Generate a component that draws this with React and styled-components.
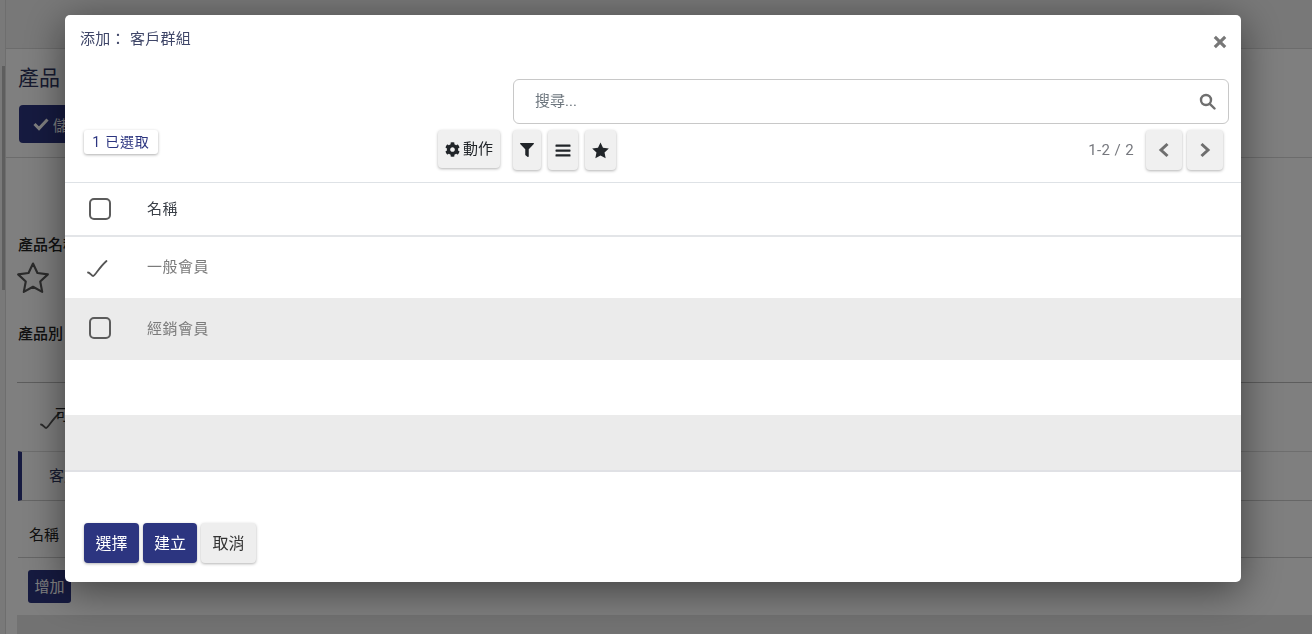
import React from 'react';
import styled, { createGlobalStyle } from 'styled-components';

const Global = createGlobalStyle`
  html, body { margin: 0; height: 100%; overflow: hidden; background: #fff; }
  body { font-family: Roboto, "Noto Sans CJK TC", sans-serif; font-size: 15px; color: #212529; }
  * { box-sizing: border-box; }
`;

const Page = styled.div`
  height: 634px; overflow: hidden; display: flex;
`;
const SideRail = styled.div`
  width: 6px; flex: none; background: #f2f2f2; border-right: 1px solid #dcdcdc; padding: 66px 0 0 2px;
`;
const RailThumb = styled.div`
  width: 3px; height: 224px; background: #bdbdbd;
`;
const PageBody = styled.div`
  flex: 1; min-width: 0; display: flex; flex-direction: column;
`;
const TopBar = styled.div`
  height: 49px; flex: none; background: #f0f0f0; border-bottom: 1px solid #d8d8d8;
`;
const PageHead = styled.div`
  height: 109px; flex: none; padding: 15px 0 0 12px; border-bottom: 1px solid #d8d8d8;
`;
const PageTitle = styled.div`
  font-size: 21px; line-height: 28px; color: #2e3560; height: 41px;
`;
const SaveBtn = styled.div`
  width: 70px; height: 38px; background: #2c3580; border-radius: 4px; color: #fff; display: flex;
  align-items: center; gap: 4px; padding-left: 14px; margin-left: 1px;
`;
const Form = styled.div`
  padding: 77px 0 0 12px; flex: none; height: 293px; display: flex; flex-direction: column;
`;
const FieldLabel = styled.div`
  font-size: 15px; font-weight: 500; line-height: 20px; color: #222;
`;
const StarWrap = styled.div`
  height: 69px; padding-top: 6px; margin-left: -2px; color: #555;
`;
const Rule = styled.div`
  border-top: 1px solid #bbb; margin-top: 38px; height: 0; margin-left: -1px;
`;
const CheckRow = styled.div`
  display: flex; align-items: flex-start; padding: 23px 0 0 20px; font-size: 15px; line-height: 18px;
`;
const Tabs = styled.div`
  height: 50px; flex: none; margin-left: 12px; border-left: 4px solid #2c3580; border-top: 1px solid #ddd;
  border-bottom: 1px solid #ccc; padding: 12px 0 0 27px; color: #2e3560; font-size: 15px;
`;
const TableHead = styled.div`
  height: 57px; flex: none; margin-left: 12px; padding: 22px 0 0 11px; border-bottom: 1px solid #ccc; color: #222;
  font-size: 15px;
`;
const AddBtn = styled.div`
  width: 43px; height: 33px; margin: 12px 0 0 22px; flex: none; background: #2c3580; border-radius: 3px;
  color: #fff; display: flex; align-items: center; justify-content: center; font-size: 15px; padding-bottom: 2px;
`;
const BottomBand = styled.div`
  height: 20px; flex: none; margin: 12px 0 0 11px; background: #e4e4e4;
`;

const Backdrop = styled.div`
  position: fixed; inset: 0; background: rgba(0, 0, 0, .5); padding: 15px 71px 0 65px;
`;
const Modal = styled.div`
  width: 1176px; height: 567px; background: #fff; border-radius: 5px; display: flex; flex-direction: column;
  box-shadow: 0 8px 40px rgba(0, 0, 0, .5);
`;
const ModalHeader = styled.div`
  height: 64px; flex: none; display: flex; justify-content: space-between; padding: 13px 14px 0 15px;
`;
const ModalTitle = styled.div`
  font-size: 15px; line-height: 22px; color: #3f4668; letter-spacing: .3px;
`;
const CloseIcon = styled.svg`
  width: 14px; height: 14px; margin-top: 7px; fill: #777;
`;
const Controls = styled.div`
  height: 104px; flex: none; display: grid; grid-template-columns: 448px 1fr; border-bottom: 1px solid #dee2e6;
`;
const LeftControls = styled.div`
  display: flex; justify-content: space-between; align-items: flex-start; padding: 51px 0 0 19px;
`;
const Badge = styled.div`
  height: 24px; width: 74px; border-radius: 3px; background: #fff; color: #2c3580; font-size: 14px; letter-spacing: .8px;
  display: flex; align-items: center; justify-content: center; white-space: nowrap; padding-bottom: 2px;
  box-shadow: 0 1px 3px rgba(0, 0, 0, .32);
`;
const RightControls = styled.div`
  display: flex; flex-direction: column; padding-right: 12px;
`;
const SearchBox = styled.div`
  height: 45px; border: 1px solid #c8c8c8; border-radius: 6px; display: flex; align-items: center;
  justify-content: space-between; padding: 0 12px 0 21px; color: #6c757d; font-size: 15px;
`;
const SearchText = styled.span`
  padding-bottom: 4px;
`;
const ToolRow = styled.div`
  display: flex; align-items: center; margin-top: 6px; height: 40px;
`;
const ToolBtn = styled.div`
  height: ${p => p.$h || 38}px; width: ${p => p.$w}px; margin-right: ${p => p.$mr || 0}px; flex: none; background: #f0f0f0; border-radius: 4px;
  color: #212529; display: flex; align-items: center; justify-content: center; gap: 3px; font-size: 15px;
  box-shadow: 0 1px 3px rgba(0, 0, 0, .3); white-space: nowrap;
`;
const ActionLabel = styled.span`
  padding-bottom: 3px;
`;
const ActionCol = styled.div`
  margin-right: 13px;
`;
const Pager = styled.div`
  margin-left: auto; display: flex; align-items: center; color: #76787e; font-size: 15px; margin-right: 6px;
`;
const PagerText = styled.div`
  margin: 0 12px 0 0; letter-spacing: .4px;
`;
const HeadRow = styled.div`
  height: 54px; flex: none; display: flex; align-items: center; border-bottom: 2px solid #e3e5e8; color: #3a3f47; padding-bottom: 1px;
`;
const Row = styled.div`
  height: ${p => p.$h}px; flex: none; display: flex; align-items: center; background: ${p => (p.$alt ? '#ebebeb' : '#fff')};
  border-bottom: ${p => (p.$end ? '2px solid #e0e1e5' : '0')}; color: #7b7b7b; padding-bottom: 2px;
`;
const CheckCell = styled.div`
  width: 82px; flex: none; padding-left: ${p => p.$pl || 24}px; display: flex;
`;
const Box = styled.div`
  width: 22px; height: 22px; border: 2px solid #5c5c5c; border-radius: 5px; background: transparent;
`;
const NameCell = styled.div`
  font-size: 15px; letter-spacing: .5px; padding-bottom: 2px;
`;
const Footer = styled.div`
  padding: 51px 0 0 19px; display: flex; gap: 4px;
`;
const FootBtn = styled.div`
  height: 40px; width: ${p => p.$w}px; border-radius: 4px; display: flex; align-items: center; justify-content: center;
  font-size: 16px; background: ${p => (p.$primary ? '#2c3580' : '#eeeeee')}; color: ${p => (p.$primary ? '#fff' : '#333')};
  box-shadow: 0 1px 3px rgba(0, 0, 0, .3); padding-bottom: 3px;
`;
const CheckGap = styled.span`
  display: flex; margin-right: -9px;
`;

const Check = ({ size = 26 }) => (
  <svg width={size} height={size} viewBox="0 0 26 26" fill="none" stroke="#555" strokeWidth="1.8" strokeLinecap="round" strokeLinejoin="round">
    <path d="M3 18.500c2 0 3.600 3.500 5.200 3.500C10 22 14 13.500 21.500 7" />
  </svg>
);
const Gear = () => (
  <svg width="15" height="15" viewBox="0 0 512 512" fill="#212529"><path d="M487.400 315.700l-42.600-24.600c4.300-23.200 4.300-47 0-70.200l42.600-24.600c4.900-2.800 7.100-8.600 5.500-14-11.100-35.600-30-67.800-54.700-94.600-3.800-4.100-10-5.100-14.800-2.300L380.800 110c-17.900-15.400-38.500-27.300-60.800-35.100V25.800c0-5.600-3.900-10.500-9.400-11.700-36.700-8.200-74.300-7.800-109.200 0-5.500 1.200-9.400 6.100-9.400 11.700V75c-22.200 7.900-42.800 19.800-60.800 35.100L88.700 85.500c-4.900-2.800-11-1.900-14.800 2.300-24.700 26.700-43.600 58.900-54.700 94.600-1.700 5.400.6 11.200 5.500 14L67.300 221c-4.300 23.200-4.300 47 0 70.200l-42.600 24.600c-4.900 2.800-7.100 8.600-5.500 14 11.100 35.600 30 67.800 54.700 94.600 3.800 4.100 10 5.100 14.800 2.300l42.600-24.600c17.900 15.400 38.500 27.300 60.800 35.100v49.200c0 5.600 3.900 10.500 9.400 11.700 36.700 8.200 74.300 7.800 109.200 0 5.500-1.200 9.400-6.100 9.400-11.700v-49.200c22.200-7.900 42.800-19.800 60.800-35.100l42.600 24.600c4.900 2.800 11 1.900 14.800-2.300 24.700-26.700 43.600-58.900 54.700-94.600 1.500-5.500-.7-11.300-5.600-14.100zM256 336c-44.100 0-80-35.900-80-80s35.900-80 80-80 80 35.900 80 80-35.900 80-80 80z" /></svg>
);
const Filter = () => (
  <svg width="14" height="14" viewBox="0 0 512 512" fill="#212529"><path d="M487.976 0H24.028C2.710 0-8.047 25.866 7.058 40.971L192 225.941V432c0 7.831 3.821 15.170 10.237 19.662l80 55.980C298.020 518.690 320 507.493 320 487.980V225.941l184.947-184.970C520.021 25.896 509.338 0 487.976 0z" /></svg>
);
const Bars = () => (
  <svg width="16" height="15" viewBox="0 0 16 15" fill="#212529"><rect x="0.500" y="1.500" width="15" height="2.300" rx=".6" /><rect x="0.500" y="6.400" width="15" height="2.300" rx=".6" /><rect x="0.500" y="11.300" width="15" height="2.300" rx=".6" /></svg>
);
const Star = ({ size = 19, fill = '#212529', stroke = 'none', sw = 0 }) => (
  <svg width={size} height={size} viewBox="0 0 24 24" fill={fill} stroke={stroke} strokeWidth={sw} strokeLinejoin="round"><path d="M12 1.800l3.150 6.700 7.350.95-5.400 5.050 1.400 7.300L12 18.200l-6.500 3.600 1.400-7.300-5.400-5.050 7.350-.95z" /></svg>
);
const Search = () => (
  <svg width="17" height="17" viewBox="0 0 17 17" fill="none" stroke="#6f6f6f" strokeWidth="2.400" strokeLinecap="round"><circle cx="7" cy="7" r="5" /><path d="M10.800 10.800l4.700 4.700" /></svg>
);
const Chevron = ({ dir }) => (
  <svg width="12" height="16" viewBox="0 0 12 16" fill="none" stroke="#6e6e6e" strokeWidth="3" strokeLinejoin="miter"><path d={dir === 'l' ? 'M9.500 2L3 8l6.500 6' : 'M2.500 2L9 8l-6.500 6'} /></svg>
);

export default function App() {
  return (
    <Page>
      <Global />
      <SideRail><RailThumb /></SideRail>
      <PageBody>
        <TopBar />
        <PageHead>
          <PageTitle>產品</PageTitle>
          <SaveBtn>
            <svg width="16" height="14" viewBox="0 0 16 14" fill="none" stroke="#fff" strokeWidth="3"><path d="M1.500 7l4.500 4.500 8.500-9" /></svg>
            儲存
          </SaveBtn>
        </PageHead>
        <Form>
          <FieldLabel>產品名稱</FieldLabel>
          <StarWrap><Star size={34} fill="none" stroke="#555" sw={1.500} /></StarWrap>
          <FieldLabel>產品別</FieldLabel>
          <Rule />
          <CheckRow><CheckGap><Check /></CheckGap>可銷售</CheckRow>
        </Form>
        <Tabs>客戶群組</Tabs>
        <TableHead>名稱</TableHead>
        <AddBtn>增加</AddBtn>
        <BottomBand />
      </PageBody>
      <Backdrop>
        <Modal>
          <ModalHeader>
            <ModalTitle>添加： 客戶群組</ModalTitle>
            <CloseIcon viewBox="0 0 12 12"><path d="M2.500.6L6 4.100 9.500.6l1.900 1.900L7.900 6l3.500 3.500-1.900 1.900L6 7.900l-3.500 3.500L.6 9.500 4.100 6 .6 2.500z" /></CloseIcon>
          </ModalHeader>
          <Controls>
            <LeftControls>
              <Badge>1 已選取</Badge>
              <ActionCol>
                <ToolBtn $w={62}><Gear /><ActionLabel>動作</ActionLabel></ToolBtn>
              </ActionCol>
            </LeftControls>
            <RightControls>
              <SearchBox><SearchText>搜尋...</SearchText><Search /></SearchBox>
              <ToolRow>
                <ToolBtn $w={28} $h={40} $mr={7}><Filter /></ToolBtn>
                <ToolBtn $w={30} $h={40} $mr={7}><Bars /></ToolBtn>
                <ToolBtn $w={31} $h={40}><Star /></ToolBtn>
                <Pager>
                  <PagerText>1-2 / 2</PagerText>
                  <ToolBtn $w={36} $h={40} $mr={5}><Chevron dir="l" /></ToolBtn>
                  <ToolBtn $w={36} $h={40}><Chevron dir="r" /></ToolBtn>
                </Pager>
              </ToolRow>
            </RightControls>
          </Controls>
          <HeadRow>
            <CheckCell><Box /></CheckCell>
            <NameCell>名稱</NameCell>
          </HeadRow>
          <Row $h={61}>
            <CheckCell $pl={20}><Check /></CheckCell>
            <NameCell>一般會員</NameCell>
          </Row>
          <Row $h={62} $alt>
            <CheckCell><Box /></CheckCell>
            <NameCell>經銷會員</NameCell>
          </Row>
          <Row $h={55} />
          <Row $h={57} $alt $end />
          <Footer>
            <FootBtn $w={55} $primary>選擇</FootBtn>
            <FootBtn $w={54} $primary>建立</FootBtn>
            <FootBtn $w={55}>取消</FootBtn>
          </Footer>
        </Modal>
      </Backdrop>
    </Page>
  );
}
